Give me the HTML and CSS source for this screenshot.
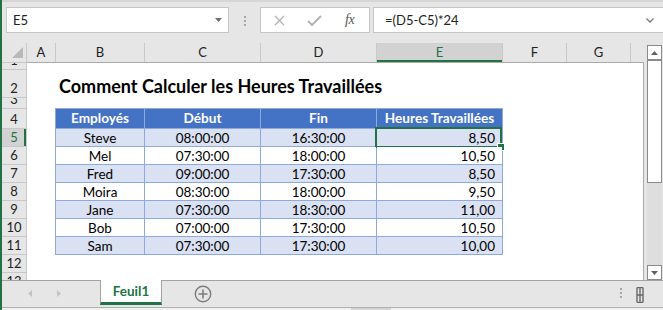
FILE: index.html
```html
<!DOCTYPE html>
<html lang="fr">
<head>
<meta charset="utf-8">
<title>Feuil1</title>
<link rel="stylesheet" href="styles.css">
</head>
<body>
<div class="app">
  <div class="topstrip"></div>
  <div class="fbar">
    <div class="namebox">
      <span class="nb-text">E5</span>
      <svg class="nb-arrow" width="7" height="4" viewBox="0 0 7 4"><path d="M0 0H7L3.5 4Z" fill="#6f6f6f"/></svg>
    </div>
    <div class="vdots"><i></i><i></i><i></i></div>
    <div class="fbtns">
      <svg class="ic-x" width="11" height="11" viewBox="0 0 11 11"><path d="M1 1L10 10M10 1L1 10" stroke="#b3b3b3" stroke-width="1.3" fill="none"/></svg>
      <svg class="ic-check" width="15" height="11" viewBox="0 0 15 11"><path d="M1 6L5 10L14 1" stroke="#b3b3b3" stroke-width="2" fill="none"/></svg>
      <span class="fx">fx</span>
    </div>
    <div class="finput">
      <span class="ftext">=(D5-C5)*24</span>
      <svg class="chev" width="8" height="5" viewBox="0 0 8 5"><path d="M0.5 0.5L4 4L7.5 0.5" stroke="#777" stroke-width="1.3" fill="none"/></svg>
    </div>
  </div>

  <div class="main">
    <div class="sheet">
      <div class="colheads">
        <div class="corner"><svg width="11" height="11" viewBox="0 0 11 11"><path d="M11 0V11H0Z" fill="#b9b9b9"/></svg></div>
        <div class="ch w-a">A</div>
        <div class="ch w-b">B</div>
        <div class="ch w-c">C</div>
        <div class="ch w-d">D</div>
        <div class="ch w-e sel">E</div>
        <div class="ch w-f">F</div>
        <div class="ch w-g">G</div>
        <div class="ch w-rest"></div>
      </div>
      <div class="body">
        <div class="rowheads">
          <div class="rh h1">1</div>
          <div class="rh h2">2</div>
          <div class="rh h3">3</div>
          <div class="rh h4">4</div>
          <div class="rh sel">5</div>
          <div class="rh">6</div>
          <div class="rh">7</div>
          <div class="rh">8</div>
          <div class="rh">9</div>
          <div class="rh">10</div>
          <div class="rh">11</div>
          <div class="rh">12</div>
          <div class="rh">13</div>
        </div>
        <div class="cells">
          <div class="r1"></div>
          <div class="title">Comment Calculer les Heures Travaillées</div>
          <div class="r3"></div>
          <div class="tbl">
            <div class="th">Employés</div><div class="th">Début</div><div class="th">Fin</div><div class="th">Heures Travaillées</div>
            <div class="td band">Steve</div><div class="td band">08:00:00</div><div class="td band">16:30:00</div><div class="td band num active">8,50<span class="selbox"><span class="handle"></span></span></div>
            <div class="td">Mel</div><div class="td">07:30:00</div><div class="td">18:00:00</div><div class="td num">10,50</div>
            <div class="td band">Fred</div><div class="td band">09:00:00</div><div class="td band">17:30:00</div><div class="td band num">8,50</div>
            <div class="td">Moira</div><div class="td">08:30:00</div><div class="td">18:00:00</div><div class="td num">9,50</div>
            <div class="td band">Jane</div><div class="td band">07:30:00</div><div class="td band">18:30:00</div><div class="td band num">11,00</div>
            <div class="td">Bob</div><div class="td">07:00:00</div><div class="td">17:30:00</div><div class="td num">10,50</div>
            <div class="td band">Sam</div><div class="td band">07:30:00</div><div class="td band">17:30:00</div><div class="td band num">10,00</div>
          </div>
        </div>
      </div>
    </div>
    <div class="vscroll">
      <div class="sb-btn"><svg width="7" height="4" viewBox="0 0 7 4"><path d="M0 4H7L3.5 0Z" fill="#606060"/></svg></div>
      <div class="sb-thumb"></div>
      <div class="sb-track"></div>
      <div class="sb-btn"><svg width="7" height="4" viewBox="0 0 7 4"><path d="M0 0H7L3.5 4Z" fill="#606060"/></svg></div>
    </div>
  </div>

  <div class="tabbar">
    <div class="tabrow">
      <svg class="arr-l" width="4" height="7" viewBox="0 0 4 7"><path d="M4 0V7L0 3.5Z" fill="#c3c3c3"/></svg>
      <svg class="arr-r" width="4" height="7" viewBox="0 0 4 7"><path d="M0 0V7L4 3.5Z" fill="#c3c3c3"/></svg>
      <div class="tab">Feuil1</div>
      <svg class="plus" width="18" height="18" viewBox="0 0 18 18"><circle cx="9" cy="9" r="7.7" stroke="#7d7d7d" stroke-width="1.4" fill="none"/><path d="M9 4.5V13.5M4.5 9H13.5" stroke="#7d7d7d" stroke-width="1.6"/></svg>
      <div class="spacer"></div>
      <div class="tdots"><i></i><i></i><i></i></div>
      <svg class="split" width="8" height="16" viewBox="0 0 8 16"><path d="M1 0.5V15.5M7 0.5V15.5M4 0.5V15.5M1 0.5H7M1 15.5H7M1 8H7" stroke="#6a6a6a" stroke-width="1.4" fill="none"/></svg>
    </div>
    <div class="hstrip"><div class="hthumb"></div></div>
  </div>
</div>
</body>
</html>
```

FILE: styles.css
```css
* { box-sizing: border-box; margin: 0; padding: 0; }
html, body { width: 663px; height: 310px; overflow: hidden; }
body {
  background: #e6e6e6;
  font-family: Lato, "Liberation Sans", sans-serif;
  color: #000;
}
.app {
  height: 310px;
  border-left: 2px solid #217346;
  display: flex;
  flex-direction: column;
}
.topstrip { height: 2px; background: #d6d6d6; }

/* formula bar */
.fbar {
  height: 41px;
  display: flex;
  align-items: flex-start;
  padding: 5px 0 0 4px;
}
.namebox {
  width: 223px;
  height: 26px;
  background: #fff;
  border: 1px solid #c6c6c6;
  display: flex;
  align-items: center;
  padding-left: 6px;
  padding-right: 6px;
  font-size: 13px;
  color: #222;
}
.nb-text { flex: 1; }
.nb-arrow { display: block; }
.vdots {
  margin-left: 15px;
  padding-top: 9px;
  display: flex;
  flex-direction: column;
  gap: 2px;
}
.vdots i, .tdots i {
  display: block;
  width: 2px;
  height: 2px;
  background: #a6a6a6;
}
.fbtns {
  margin-left: 14px;
  width: 110px;
  height: 26px;
  background: #fff;
  border: 1px solid #c6c6c6;
  display: flex;
  align-items: center;
  padding-left: 13px;
}
.ic-x { display: block; }
.ic-check { display: block; margin-left: 22px; }
.fx {
  margin-left: 23px;
  font-family: "Liberation Serif", serif;
  font-style: italic;
  font-size: 14px;
  color: #555;
  letter-spacing: -0.5px;
}
.finput {
  flex: 1;
  margin-left: 3px;
  height: 26px;
  background: #fff;
  border: 1px solid #c6c6c6;
  border-right: none;
  display: flex;
  align-items: center;
  padding-left: 11px;
  padding-right: 9px;
  font-size: 13px;
  color: #222;
}
.ftext { flex: 1; }
.chev { display: block; }

/* sheet */
.main { height: 237px; display: flex; }
.sheet { width: 642px; display: flex; flex-direction: column; }
.colheads { height: 19px; display: flex; }
.corner {
  width: 25px;
  border-right: 1px solid #c8c8c8;
  display: flex;
  align-items: flex-end;
  justify-content: flex-end;
  padding: 0 3px 4px 0;
}
.corner svg { display: block; }
.ch {
  border-right: 1px solid #c8c8c8;
  text-align: center;
  font-size: 13px;
  line-height: 19px;
  color: #222;
}
.ch.sel {
  background: #d2d2d2;
  color: #217346;
  box-shadow: inset 0 -2px 0 #217346;
}
.w-a { width: 29px; }
.w-b { width: 89px; }
.w-c { width: 116px; }
.w-d { width: 116px; }
.w-e { width: 126px; }
.w-f { width: 64px; }
.w-g { width: 64px; }
.w-rest { width: 13px; border-right: none; }

.body { flex: 1; display: flex; overflow: hidden; }
.rowheads {
  width: 25px;
  border-top: 1px solid #c8c8c8;
  border-right: 1px solid #c8c8c8;
}
.rh {
  height: 18px;
  border-bottom: 1px solid #c8c8c8;
  overflow: hidden;
  display: flex;
  align-items: flex-end;
  justify-content: center;
  font-size: 13px;
  line-height: 17px;
  color: #222;
}
.rh.h1 { height: 7px; }
.rh.h2 { height: 28px; }
.rh.h3 { height: 11px; }
.rh.h4 { height: 20px; }
.rh.sel {
  background: #d2d2d2;
  color: #217346;
  box-shadow: inset -2px 0 0 #217346;
}

.cells {
  flex: 1;
  background: #fff;
  border-top: 1px solid #ababab;
  border-right: 1px solid #ababab;
}
.r1 { height: 7px; }
.title {
  height: 28px;
  padding-left: 32px;
  font-size: 18px;
  font-weight: 700;
  line-height: 32px;
  white-space: nowrap;
}
.r3 { height: 10px; }
.tbl {
  margin-left: 28px;
  width: 448px;
  display: grid;
  grid-template-columns: 88px 115px 115px 125px;
  grid-template-rows: 19px repeat(7, 17px);
  gap: 1px;
  padding: 1px;
  background: #8ea9db;
}
.th {
  background: #4472c4;
  color: #fff;
  font-weight: 700;
  font-size: 13.6px;
  line-height: 19px;
  text-align: center;
  white-space: nowrap;
}
.td {
  background: #fff;
  font-size: 13.5px;
  line-height: 18px;
  text-align: center;
  position: relative;
}
.td.band { background: #d9e1f2; }
.td.num { text-align: right; padding-right: 7px; }
.selbox {
  position: absolute;
  left: -2px;
  top: -2px;
  width: 127px;
  height: 21px;
  border: 2px solid #217346;
}
.handle {
  position: absolute;
  right: -4px;
  bottom: -4px;
  width: 6px;
  height: 6px;
  background: #217346;
  outline: 1px solid #fff;
}

/* vertical scrollbar */
.vscroll {
  width: 19px;
  padding: 2px 1px 0 3px;
  display: flex;
  flex-direction: column;
}
.sb-btn {
  height: 15px;
  background: #fff;
  border: 1px solid #8a8a8a;
  display: flex;
  align-items: center;
  justify-content: center;
}
.sb-btn svg { display: block; }
.sb-thumb {
  height: 123px;
  background: #fff;
  border: 1px solid #8a8a8a;
}
.sb-track { flex: 1; background: #dedede; }

/* tab bar */
.tabbar { height: 30px; display: flex; flex-direction: column; }
.tabrow {
  height: 27px;
  border-top: 1px solid #a3a3a3;
  display: flex;
  align-items: flex-start;
}
.arr-l { display: block; margin: 9px 0 0 26px; }
.arr-r { display: block; margin: 9px 0 0 25px; }
.tab {
  margin: -1px 0 0 39px;
  width: 62px;
  height: 25px;
  background: #fff;
  border-left: 1px solid #a3a3a3;
  border-right: 1px solid #a3a3a3;
  border-bottom: 3px solid #217346;
  text-align: center;
  font-size: 13.5px;
  font-weight: 700;
  line-height: 22px;
  color: #217346;
}
.plus { display: block; margin: 4px 0 0 32px; }
.spacer { flex: 1; }
.tdots {
  margin-top: 7px;
  display: flex;
  flex-direction: column;
  gap: 2px;
}
.split { display: block; margin: 6px 19px 0 14px; }
.hstrip {
  height: 3px;
  border-top: 1px solid #b0b0b0;
  background: #f0f0f0;
}
.hthumb {
  margin-left: 349px;
  width: 40px;
  height: 2px;
  background: #d4d4d4;
}
```
